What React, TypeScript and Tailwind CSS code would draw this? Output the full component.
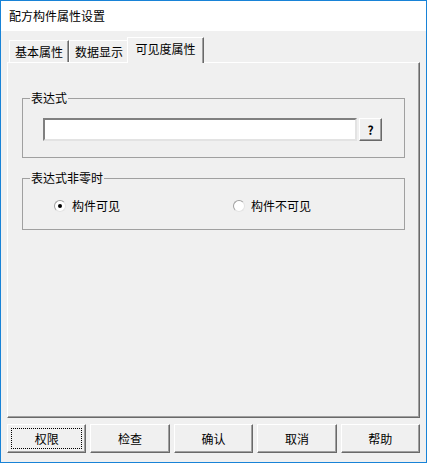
import React from 'react';

const FONT = '"Noto Sans CJK SC", "Liberation Sans", sans-serif';

// raised 3D frame as used by classic Windows buttons
const raised =
  'border border-t-white border-l-white border-r-[#696969] border-b-[#696969] shadow-[inset_-1px_-1px_0_#a0a0a0]';

function Tab({ label, active }: { label: string; active?: boolean }) {
  if (active) {
    return (
      <div className="relative z-10 -mx-[2px] -mb-[1px] h-[26px] w-[77px] flex items-center justify-center bg-[#f0f0f0] border border-b-0 border-t-white border-l-white border-r-[#696969] shadow-[inset_-1px_0_0_#a0a0a0] pb-[3px]">
        {label}
      </div>
    );
  }
  return (
    <div className="h-[22px] w-[60px] flex items-center justify-center bg-[#f0f0f0] border border-b-0 border-t-white border-l-white border-r-[#696969] shadow-[inset_-1px_0_0_#a0a0a0] pt-[1px]">
      {label}
    </div>
  );
}

function Radio({ label, checked }: { label: string; checked?: boolean }) {
  return (
    <div className="flex items-center gap-[6px] h-[14px]">
      <span className="w-[12px] h-[12px] rounded-full flex items-center justify-center bg-white border border-t-[#a0a0a0] border-l-[#a0a0a0] border-r-[#e3e3e3] border-b-[#e3e3e3]">
        {checked && <span className="w-[4px] h-[4px] rounded-full bg-black" />}
      </span>
      <span>{label}</span>
    </div>
  );
}

function Btn({ label, focused }: { label: string; focused?: boolean }) {
  return (
    <div className={`h-[29px] bg-[#f0f0f0] flex items-center justify-center p-[3px] ${raised}`}>
      <div className={`w-full h-full flex items-center justify-center ${focused ? 'border border-dotted border-black' : ''}`}>
        {label}
      </div>
    </div>
  );
}

export default function App() {
  return (
    <div
      className="w-[427px] h-[463px] border border-[#1883d7] flex flex-col text-[12px] leading-[14px] text-black bg-[#f0f0f0]"
      style={{ fontFamily: FONT }}
    >
      {/* title bar */}
      <div className="h-[30px] bg-white flex items-center px-[8px] shrink-0">配方构件属性设置</div>

      <div className="flex-1 flex flex-col px-[6px]">
        {/* tabs */}
        <div className="flex items-end pl-[2px] mt-[5px] h-[26px]">
          <Tab label="基本属性" />
          <Tab label="数据显示" />
          <Tab label="可见度属性" active />
        </div>

        {/* tab panel */}
        <div className="h-[356px] flex flex-col border border-t-white border-l-white border-r-[#696969] border-b-[#696969] shadow-[inset_-1px_-1px_0_#a0a0a0]">
          <fieldset className="ml-[14px] w-[383px] mt-[28px] border border-[#a0a0a0]">
            <legend className="ml-[7px] px-[1px]">表达式</legend>
            <div className="flex items-center gap-[2px] pl-[20px] pt-[13px] pb-[16px]">
              <div className="w-[314px] h-[23px] bg-white border-2 border-t-[#808080] border-l-[#808080] border-r-[#e3e3e3] border-b-[#e3e3e3]" />
              <div className={`w-[23px] h-[23px] flex items-center justify-center font-bold bg-[#f0f0f0] ${raised}`}>?</div>
            </div>
          </fieldset>

          <fieldset className="ml-[14px] w-[383px] mt-[13px] border border-[#a0a0a0]">
            <legend className="ml-[7px] px-[1px]">表达式非零时</legend>
            <div className="flex items-center pl-[31px] pt-[14px] pb-[16px]">
              <div className="w-[179px]">
                <Radio label="构件可见" checked />
              </div>
              <Radio label="构件不可见" />
            </div>
          </fieldset>
        </div>

        {/* bottom buttons */}
        <div className="grid grid-cols-5 gap-[4px] mt-[6px]">
          <Btn label="权限" focused />
          <Btn label="检查" />
          <Btn label="确认" />
          <Btn label="取消" />
          <Btn label="帮助" />
        </div>
      </div>
    </div>
  );
}
